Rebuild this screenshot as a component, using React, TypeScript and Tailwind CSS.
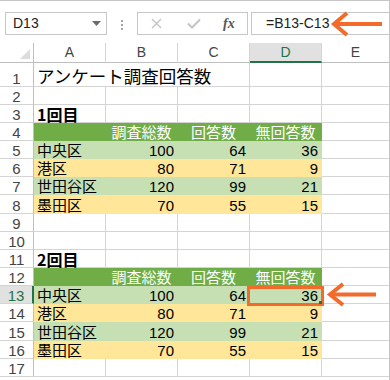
import React from "react";

type Kind = "plain" | "title" | "bold" | "head" | "green" | "yellow";

type Row = {
  n: number;
  h: string;
  kind: Kind;
  cells: string[];
};

const rows: Row[] = [
  { n: 1, h: "h-[24px]", kind: "title", cells: ["アンケート調査回答数"] },
  { n: 2, h: "h-[18px]", kind: "plain", cells: [] },
  { n: 3, h: "h-[18px]", kind: "bold", cells: ["1回目"] },
  { n: 4, h: "h-[18px]", kind: "head", cells: ["", "調査総数", "回答数", "無回答数"] },
  { n: 5, h: "h-[18px]", kind: "green", cells: ["中央区", "100", "64", "36"] },
  { n: 6, h: "h-[18px]", kind: "yellow", cells: ["港区", "80", "71", "9"] },
  { n: 7, h: "h-[18px]", kind: "green", cells: ["世田谷区", "120", "99", "21"] },
  { n: 8, h: "h-[19px]", kind: "yellow", cells: ["墨田区", "70", "55", "15"] },
  { n: 9, h: "h-[18px]", kind: "plain", cells: [] },
  { n: 10, h: "h-[18px]", kind: "plain", cells: [] },
  { n: 11, h: "h-[18px]", kind: "bold", cells: ["2回目"] },
  { n: 12, h: "h-[18px]", kind: "head", cells: ["", "調査総数", "回答数", "無回答数"] },
  { n: 13, h: "h-[18px]", kind: "green", cells: ["中央区", "100", "64", "36"] },
  { n: 14, h: "h-[18px]", kind: "yellow", cells: ["港区", "80", "71", "9"] },
  { n: 15, h: "h-[19px]", kind: "green", cells: ["世田谷区", "120", "99", "21"] },
  { n: 16, h: "h-[18px]", kind: "yellow", cells: ["墨田区", "70", "55", "15"] },
  { n: 17, h: "h-[18px]", kind: "plain", cells: [] },
];

function cellClass(kind: Kind, col: number) {
  if (kind === "head") return "bg-[#70ad47] border-r border-b border-[#70ad47] text-white justify-center";
  if (kind === "green") return "bg-[#c6e0b4] border-r border-b border-[#c6e0b4]";
  if (kind === "yellow") return "bg-[#ffe699] border-r border-b border-[#ffe699]";
  if (kind === "title" && col < 2) return "border-b border-[#d4d4d4]";
  return "border-r border-b border-[#d4d4d4]";
}

function Cell({ kind, col, text }: { kind: Kind; col: number; text?: string }) {
  const numeric = col > 0 && (kind === "green" || kind === "yellow");
  const align =
    kind === "head" ? "" : col === 0 ? "justify-start pl-[3px]" : "justify-end pr-[3px]";
  const size =
    kind === "title"
      ? "text-[17.5px] font-normal leading-[20px]"
      : kind === "bold"
        ? "text-[16px] font-bold leading-[16px]"
        : "text-[15px] leading-[16px]";
  return (
    <div
      className={`flex w-[72px] shrink-0 items-end whitespace-nowrap ${cellClass(kind, col)} ${align} ${size}`}
    >
      {text ? (
        <span
          className={
            numeric ? "relative top-[1px] block font-['Liberation_Sans',sans-serif]" : "block"
          }
        >
          {text}
        </span>
      ) : null}
    </div>
  );
}

const App = () => {
  return (
    <div className="relative h-[380px] w-[390px] overflow-hidden border-r border-t border-[#c6c6c6] bg-white font-['Noto_Sans_CJK_JP',sans-serif] text-black">
      {/* formula bar */}
      <div className="flex h-[42px] items-start pt-[11px]">
        <div className="ml-[5px] flex h-[23px] w-[102px] items-center justify-between border border-[#c6c6c6] pl-[7px] pr-[5px]">
          <span className="font-['Liberation_Sans',sans-serif] text-[14px] text-[#222]">D13</span>
          <svg width="9" height="5" viewBox="0 0 9 5">
            <polygon points="0,0 9,0 4.5,5" fill="#6b6b6b" />
          </svg>
        </div>
        <div className="ml-[14px] mt-[8px] flex flex-col gap-[2px]">
          <span className="h-[2px] w-[2px] bg-[#a6a6a6]" />
          <span className="h-[2px] w-[2px] bg-[#a6a6a6]" />
          <span className="h-[2px] w-[2px] bg-[#a6a6a6]" />
        </div>
        <div className="ml-[14px] flex h-[23px] w-[111px] items-center border border-[#c6c6c6] pl-[13px]">
          <svg width="11" height="11" viewBox="0 0 11 11">
            <path d="M1 1 L10 10 M10 1 L1 10" stroke="#c4c4c4" strokeWidth="1.4" />
          </svg>
          <svg className="ml-[25px]" width="14" height="11" viewBox="0 0 14 11">
            <path d="M1 5.5 L5 9.5 L13 1.5" stroke="#c4c4c4" strokeWidth="2" fill="none" />
          </svg>
          <span className="ml-[22px] font-['Liberation_Serif',serif] text-[14px] font-bold italic text-[#555]">
            fx
          </span>
        </div>
        <div className="ml-[3px] flex h-[23px] flex-1 items-center border border-r-0 border-[#c6c6c6] pl-[14px]">
          <span className="font-['Liberation_Sans',sans-serif] text-[14px] text-[#222]">=B13-C13</span>
        </div>
      </div>

      {/* column headers */}
      <div className="flex h-[20px] font-['Liberation_Sans',sans-serif] text-[14px] text-[#444]">
        <div className="flex w-[34px] shrink-0 items-end justify-end border-b border-r border-[#bfbfbf] pb-[3px] pr-[3px]">
          <svg width="10" height="10" viewBox="0 0 10 10">
            <polygon points="10,0 10,10 0,10" fill="#dcdcdc" />
          </svg>
        </div>
        {["A", "B", "C"].map((c) => (
          <div
            key={c}
            className="flex w-[72px] shrink-0 items-center justify-center border-b border-r border-b-[#bfbfbf] border-r-[#d4d4d4]"
          >
            {c}
          </div>
        ))}
        <div className="flex w-[72px] shrink-0 items-center justify-center border-b-2 border-r border-b-[#217346] border-r-[#d4d4d4] bg-[#e1e1e1] pt-[1px] text-[#217346]">
          D
        </div>
        <div className="flex flex-1 items-center justify-center border-b border-[#bfbfbf]">E</div>
      </div>

      {/* rows */}
      {rows.map((r) => (
        <div key={r.n} className={`flex ${r.h}`}>
          <div
            className={
              r.n === 13
                ? "flex w-[34px] shrink-0 items-end justify-center border-b border-r-2 border-b-[#d4d4d4] border-r-[#217346] bg-[#e1e1e1] font-['Liberation_Sans',sans-serif] text-[15px] leading-[16px] text-[#217346]"
                : "flex w-[34px] shrink-0 items-end justify-center border-b border-r border-b-[#d4d4d4] border-r-[#bfbfbf] font-['Liberation_Sans',sans-serif] text-[15px] leading-[16px] text-[#444]"
            }
          >
            <span className="relative top-[1px] block">{r.n}</span>
          </div>
          {[0, 1, 2, 3].map((i) => (
            <Cell key={i} kind={r.kind} col={i} text={r.cells[i]} />
          ))}
          <div className="flex-1 border-b border-[#d4d4d4]" />
        </div>
      ))}

      {/* selection annotation */}
      <div className="absolute left-[247px] top-[285px] h-[20px] w-[77px] border-[3px] border-[#f26b2b]" />
      <div className="absolute left-[319px] top-[300px] h-[3px] w-[3px] bg-[#217346]" />

      {/* arrows */}
      <svg className="absolute left-[330px] top-[10px]" width="56" height="28" viewBox="0 0 56 28">
        <path d="M17 2 L4 13 L17 24" stroke="#f26b2b" strokeWidth="4" fill="none" />
        <path d="M6 13 L52 13" stroke="#f26b2b" strokeWidth="4" />
      </svg>
      <svg className="absolute left-[325px] top-[280px]" width="56" height="28" viewBox="0 0 56 28">
        <path d="M18 3 L5 13.5 L18 24" stroke="#f26b2b" strokeWidth="4" fill="none" />
        <path d="M7 13.5 L51 13.5" stroke="#f26b2b" strokeWidth="4" />
      </svg>
    </div>
  );
};

export default App;
